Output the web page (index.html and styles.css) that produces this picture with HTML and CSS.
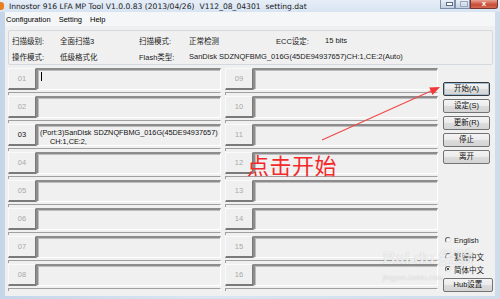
FILE: index.html
```html
<!DOCTYPE html>
<html lang="zh-CN">
<head>
    <meta charset="UTF-8">
    <title>Innostor 916 LFA MP Tool</title>
    <link rel="stylesheet" href="styles.css">
</head>
<body>
<div class="window">
    <div class="titlebar">
        <span class="app-icon"></span>
        <span class="title">Innostor 916 LFA MP Tool V1.0.0.83 (2013/04/26)</span>
        <span class="title">V112_08_04301</span>
        <span class="title">setting.dat</span>
        <div class="caption">
            <span class="cap-btn min"></span>
            <span class="cap-btn max"></span>
            <span class="cap-btn close">x</span>
        </div>
    </div>
    <div class="client">
        <div class="menubar">
            <span>Configuration</span>
            <span>Setting</span>
            <span>Help</span>
        </div>
        <div class="info">
            <span>扫描级别:</span><span>全面扫描3</span>
            <span>扫描模式:</span><span>正常检测</span>
            <span>ECC设定:</span><span>15 bits</span>
            <span>操作模式:</span><span>低级格式化</span>
            <span>Flash类型:</span><span class="wide">SanDisk SDZNQFBMG_016G(45DE94937657)CH:1,CE:2(Auto)</span>
        </div>
        <div class="main">
            <div class="slots">
                <div class="slot"><span class="num">01</span><div class="box"><span class="caret"></span></div><div class="bar"></div></div>
                <div class="slot"><span class="num">02</span><div class="box"></div><div class="bar"></div></div>
                <div class="slot"><span class="num on">03</span><div class="box"><p class="msg">(Port:3)SanDisk SDZNQFBMG_016G(45DE94937657)<br><span class="indent">CH:1,CE:2,</span></p></div><div class="bar"></div></div>
                <div class="slot"><span class="num">04</span><div class="box"></div><div class="bar"></div></div>
                <div class="slot"><span class="num">05</span><div class="box"></div><div class="bar"></div></div>
                <div class="slot"><span class="num">06</span><div class="box"></div><div class="bar"></div></div>
                <div class="slot"><span class="num">07</span><div class="box"></div><div class="bar"></div></div>
                <div class="slot"><span class="num">08</span><div class="box"></div><div class="bar"></div></div>
                <div class="slot"><span class="num">09</span><div class="box"></div><div class="bar"></div></div>
                <div class="slot"><span class="num">10</span><div class="box"></div><div class="bar"></div></div>
                <div class="slot"><span class="num">11</span><div class="box"></div><div class="bar"></div></div>
                <div class="slot"><span class="num">12</span><div class="box"></div><div class="bar"></div></div>
                <div class="slot"><span class="num">13</span><div class="box"></div><div class="bar"></div></div>
                <div class="slot"><span class="num">14</span><div class="box"></div><div class="bar"></div></div>
                <div class="slot"><span class="num">15</span><div class="box"></div><div class="bar"></div></div>
                <div class="slot"><span class="num">16</span><div class="box"></div><div class="bar"></div></div>
            </div>
            <div class="side">
                <button class="btn default">开始(A)</button>
                <button class="btn">设定(S)</button>
                <button class="btn">更新(R)</button>
                <button class="btn">停止</button>
                <button class="btn">离开</button>
                <div class="langs">
                    <label class="radio first"><span class="dot"></span>English</label>
                    <label class="radio"><span class="dot"></span>繁體中文</label>
                    <label class="radio"><span class="dot checked"></span>简体中文</label>
                </div>
                <button class="btn hub">Hub设置</button>
            </div>
        </div>
    </div>

    <svg class="arrow" width="500" height="299" viewBox="0 0 500 299">
        <line x1="322" y1="140" x2="431" y2="91" stroke="#f04848" stroke-width="1.2"/>
        <polygon points="440,87 432.5,95 429.2,87.5" fill="#f03838"/>
    </svg>
    <div class="callout">点击开始</div>
    <div class="watermark">
        <span class="wm-logo">Bai<span class="paw">&#x2022;&#x2022;</span>du 经验</span>
        <span class="wm-url">jingyan.baidu.com</span>
    </div>
</div>
</body>
</html>
```

FILE: styles.css
```css
* {
    box-sizing: border-box;
}
body {
    margin: 0;
    font-family: "Liberation Sans", "Noto Sans CJK SC", sans-serif;
    font-size: 8px;
    color: #000;
    background: #ffffff;
}
.window {
    position: relative;
    width: 500px;
    height: 299px;
    overflow: hidden;
    background: linear-gradient(90deg, #c6d6ea, #d9e5f2 40%, #cfdcec);
    display: flex;
    flex-direction: column;
}

/* title bar */
.titlebar {
    height: 12px;
    display: flex;
    align-items: center;
    padding-left: 9px;
    position: relative;
    background: linear-gradient(180deg, #e6eef8, #d8e4f2);
}
.app-icon {
    position: absolute;
    left: -3px;
    top: 2px;
    width: 7px;
    height: 8px;
    border-radius: 3px;
    background: #e8801e;
}
.title {
    font-family: "DejaVu Sans", "Liberation Sans", sans-serif;
    font-size: 7.6px;
    color: #1a1a1a;
    margin-right: 5px;
    white-space: nowrap;
}
.caption {
    margin-left: auto;
    margin-right: 2px;
    display: flex;
    align-self: flex-start;
}
.cap-btn {
    height: 9px;
    width: 15px;
    border: 1px solid #7d8fa8;
    border-top: none;
    background: linear-gradient(180deg, #e9eff7, #c3d1e3);
    position: relative;
}
.cap-btn.min::after {
    content: "";
    position: absolute;
    left: 5px;
    bottom: 2px;
    width: 5px;
    height: 2px;
    background: #fff;
    border: 1px solid #5d6d84;
}
.cap-btn.max::after {
    content: "";
    position: absolute;
    left: 4px;
    top: 1px;
    width: 6px;
    height: 4px;
    border: 1px solid #9aa8bb;
}
.cap-btn.close {
    width: 28px;
    border-color: #7a3430;
    background: linear-gradient(180deg, #e8a293, #c74a36 60%, #d46a52);
    color: #fff;
    font-size: 8px;
    font-weight: bold;
    line-height: 7px;
    text-align: center;
    border-radius: 0 0 3px 0;
}

/* client area */
.client {
    flex: 1;
    margin: 0 5px 3px 5px;
    background: #f0f0f0;
    display: flex;
    flex-direction: column;
}
.menubar {
    height: 14px;
    display: flex;
    align-items: center;
    gap: 8px;
    padding-left: 1px;
    background: #f5f6f7;
    font-size: 7.5px;
}

.info {
    margin: 4px 2px 0 3px;
    height: 35px;
    border: 1px solid #d3d9de;
    border-radius: 2px;
    display: grid;
    grid-template-columns: 48px 79px 50px 87px 49px auto;
    grid-auto-rows: 16px;
    align-items: center;
    padding: 1px 0 0 3px;
    font-size: 7.5px;
    color: #1a1a1a;
}
.info .wide {
    grid-column: 4 / span 3;
}

.main {
    margin: 3px 2px 0 3px;
    display: flex;
}
.slots {
    display: grid;
    grid-template-columns: 213px 213px;
    grid-template-rows: repeat(8, 28px);
    grid-auto-flow: column;
    column-gap: 4px;
}
.slot {
    display: grid;
    grid-template-columns: 28px 1fr;
    grid-template-rows: 22px 6px;
}
.num {
    display: flex;
    align-items: center;
    justify-content: center;
    color: #a8a8a8;
    font-size: 7.5px;
    border-top: 1px solid #fafafa;
    border-left: 1px solid #fafafa;
    border-right: 1px solid #7a7a7a;
    border-bottom: 2px solid #7a7a7a;
}
.num.on {
    color: #111;
}
.box {
    border-top: 2px solid #8c8c8c;
    border-left: 2px solid #8c8c8c;
    border-right: 1px solid #ffffff;
    border-bottom: 1px solid #ffffff;
    box-shadow: inset 1px 1px 0 #bdbdbd;
    position: relative;
}
.caret {
    position: absolute;
    left: 3px;
    top: 2px;
    width: 1px;
    height: 9px;
    background: #000;
}
.msg {
    margin: 2px 0 0 2px;
    font-size: 7.3px;
    line-height: 9px;
    color: #111;
    white-space: nowrap;
}
.indent {
    padding-left: 10px;
}
.bar {
    grid-column: 1 / span 2;
    margin-top: 2px;
    height: 3px;
    border-top: 1px solid #a0a0a0;
    border-left: 1px solid #a0a0a0;
    border-right: 1px solid #ffffff;
}

/* side column */
.side {
    margin-left: 5px;
    width: 50px;
    display: flex;
    flex-direction: column;
    align-items: flex-start;
    padding-top: 14px;
}
.btn {
    width: 47px;
    height: 14px;
    margin-bottom: 3px;
    padding: 0;
    border: 1px solid #737373;
    border-radius: 2px;
    background: linear-gradient(180deg, #f4f4f4 0%, #ebebeb 50%, #dcdcdc 51%, #d4d4d4 100%);
    font-family: "Liberation Sans", "Noto Sans CJK SC", sans-serif;
    font-size: 7.5px;
    color: #111;
    line-height: 12px;
}
.btn.default {
    border-color: #3a3a3a;
    box-shadow: inset 0 0 0 1px #9bbbd6;
}
.langs {
    margin-top: auto;
    display: flex;
    flex-direction: column;
}
.radio {
    display: flex;
    align-items: center;
    height: 12px;
    font-size: 7.5px;
    color: #1a1a1a;
    margin-top: 0;
}
.radio + .radio {
    margin-top: 1px;
}
.radio.first {
    margin-bottom: 3px;
}
.dot {
    width: 6px;
    height: 6px;
    border-radius: 50%;
    border: 1px solid #6a6a6a;
    border-right-color: #e6e6e6;
    border-bottom-color: #e6e6e6;
    background: #f7f7f7;
    margin: 0 3px 0 2px;
    position: relative;
}
.dot.checked::after {
    content: "";
    position: absolute;
    left: 1px;
    top: 1px;
    width: 2px;
    height: 2px;
    border-radius: 50%;
    background: #111;
}
.btn.hub {
    width: 50px;
    margin-top: 3px;
    margin-bottom: 0;
}

/* annotations laid over the screenshot */
.arrow {
    position: absolute;
    left: 0;
    top: 0;
    pointer-events: none;
}
.callout {
    position: absolute;
    left: 247px;
    top: 150px;
    font-family: "Noto Sans CJK SC", sans-serif;
    font-size: 22px;
    line-height: 28px;
    color: #f42a2a;
    letter-spacing: 0.5px;
}
.watermark {
    position: absolute;
    left: 383px;
    top: 247px;
    display: flex;
    flex-direction: column;
    color: rgba(255, 255, 255, 0.75);
    text-shadow: 0 0 1px rgba(120, 120, 120, 0.45);
    pointer-events: none;
}
.wm-logo {
    font-family: "Liberation Sans", "Noto Sans CJK SC", sans-serif;
    font-size: 17px;
    font-weight: bold;
    line-height: 24px;
}
.paw {
    font-size: 12px;
    letter-spacing: -2px;
}
.wm-url {
    font-size: 7px;
    line-height: 12px;
    letter-spacing: 0.2px;
}
```
